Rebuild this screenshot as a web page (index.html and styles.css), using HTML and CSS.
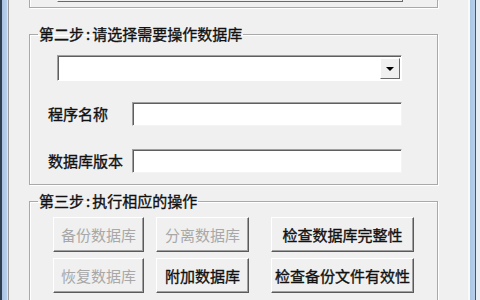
FILE: index.html
```html
<!DOCTYPE html>
<html lang="zh-CN">
<head>
<meta charset="utf-8">
<link rel="stylesheet" href="styles.css">
</head>
<body>
<div class="window">
  <div class="frame-left"></div>
  <div class="content">
    <div class="group-top">
      <div class="partial-control"></div>
    </div>
    <fieldset class="group group-db">
      <legend>第二步<span class="colon">:</span>请选择需要操作数据库</legend>
      <div class="combo">
        <div class="combo-field"></div>
        <div class="combo-btn"><span class="arrow"></span></div>
      </div>
      <div class="field-row first">
        <span class="label">程序名称</span>
        <div class="textbox"></div>
      </div>
      <div class="field-row second">
        <span class="label">数据库版本</span>
        <div class="textbox"></div>
      </div>
    </fieldset>
    <fieldset class="group group-ops">
      <legend>第三步<span class="colon">:</span>执行相应的操作</legend>
      <div class="buttons">
        <div class="btn disabled">备份数据库</div>
        <div class="btn disabled">分离数据库</div>
        <div class="btn wide">检查数据库完整性</div>
        <div class="btn disabled">恢复数据库</div>
        <div class="btn">附加数据库</div>
        <div class="btn wide">检查备份文件有效性</div>
      </div>
    </fieldset>
  </div>
  <div class="frame-right"></div>
</div>
</body>
</html>
```
FILE: styles.css
```css
html, body {
  margin: 0;
  padding: 0;
  width: 480px;
  height: 300px;
  overflow: hidden;
  background: #f0f0f0;
  font-family: "Noto Sans CJK SC", "Liberation Sans", sans-serif;
  font-size: 15px;
  color: #111;
}

.window {
  display: flex;
  width: 480px;
  height: 300px;
}

.frame-left {
  width: 9px;
  flex: none;
  background: linear-gradient(to right, #2e3f50 0, #2e3f50 2px, #a9c3e0 2px, #b8d0ea 7px, #dbe6f2 7px, #dbe6f2 8px, #9a9a9a 8px);
}

.frame-right {
  width: 12px;
  flex: none;
  background: linear-gradient(to right, #fafafa 0, #fafafa 2px, #abc6e4 2px, #b7cfea 7px, #41566a 7px, #41566a 8px, #e8eef4 8px);
}

.content {
  flex: 1;
  background: #f0f0f0;
  padding: 0 30px 0 20px;
  display: flex;
  flex-direction: column;
  -webkit-text-stroke: 0.35px currentColor;
}

.group-top {
  height: 7px;
  border: 1px solid #a9a9a9;
  border-top: none;
  box-shadow: inset 1px 0 0 #fff, 1px 1px 0 #fff;
  flex: none;
}

.partial-control {
  margin-left: 27px;
  width: 344px;
  height: 1px;
  border-left: 1px solid #fff;
  border-right: 1px solid #6a6a6a;
  border-bottom: 1px solid #6a6a6a;
}

.group {
  margin: 0;
  padding: 0;
  border: 1px solid #a9a9a9;
  box-shadow: inset 1px 1px 0 #fff, 1px 1px 0 #fff;
  min-width: 0;
  flex: none;
}

.group legend {
  margin-left: 8px;
  padding: 0 1px;
  line-height: 16px;
  font-size: 15px;
  color: #111;
}

.colon {
  display: inline-block;
  margin: 0 2px 0 2px;
}

.group-db {
  margin-top: 18px;
  padding: 13px 0 11px 0;
}

.combo {
  display: flex;
  margin-left: 27px;
  width: 345px;
  height: 26px;
  box-sizing: border-box;
  border-top: 1px solid #a0a0a0;
  border-left: 1px solid #a0a0a0;
  border-right: 1px solid #fff;
  border-bottom: 1px solid #fff;
  box-shadow: inset 1px 1px 0 #5f5f5f;
  background: #fff;
}

.combo-field {
  flex: 1;
}

.combo-btn {
  width: 20px;
  margin: 2px 1px 1px 0;
  box-sizing: border-box;
  background: #f0f0f0;
  border-top: 1px solid #fff;
  border-left: 1px solid #fff;
  border-right: 1px solid #6a6a6a;
  border-bottom: 1px solid #6a6a6a;
  display: flex;
  align-items: center;
  justify-content: center;
}

.arrow {
  width: 0;
  height: 0;
  border-left: 4px solid transparent;
  border-right: 4px solid transparent;
  border-top: 4px solid #000;
  margin-top: 1px;
}

.field-row {
  display: flex;
  align-items: center;
  margin-left: 18px;
}

.field-row.first {
  margin-top: 21px;
}

.field-row.second {
  margin-top: 23px;
}

.label {
  width: 84px;
  flex: none;
  line-height: 16px;
  white-space: nowrap;
}

.textbox {
  width: 270px;
  height: 24px;
  box-sizing: border-box;
  background: #fff;
  border-top: 1px solid #a0a0a0;
  border-left: 1px solid #a0a0a0;
  border-right: 1px solid #f4f4f4;
  border-bottom: 1px solid #f4f4f4;
  box-shadow: inset 1px 1px 0 #5f5f5f;
}

.group-ops {
  margin-top: 8px;
  padding: 8px 0 20px 0;
}

.buttons {
  display: grid;
  grid-template-columns: 91px 93px 143px;
  grid-auto-rows: 35px;
  column-gap: 12px;
  row-gap: 6px;
  margin-left: 23px;
}

.btn {
  box-sizing: border-box;
  display: flex;
  align-items: center;
  justify-content: center;
  white-space: nowrap;
  background: #f0f0f0;
  border-top: 1px solid #fff;
  border-left: 1px solid #fff;
  border-right: 1px solid #5a5a5a;
  border-bottom: 1px solid #5a5a5a;
  box-shadow: inset -1px -1px 0 #a0a0a0;
  color: #111;
  line-height: 16px;
}

.btn.wide {
  margin-left: 10px;
  margin-right: -10px;
}

.btn.disabled {
  color: #a8a8a8;
  -webkit-text-stroke: 0;
}
```
